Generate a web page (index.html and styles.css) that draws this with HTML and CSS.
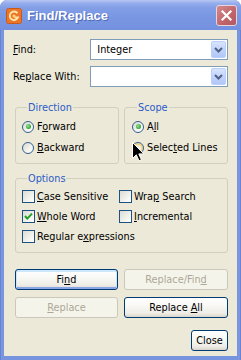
FILE: index.html
```html
<!DOCTYPE html>
<html>
<head>
<meta charset="utf-8">
<link rel="stylesheet" href="styles.css">
</head>
<body>
<div class="window">
  <div class="titlebar">
    <svg class="app-icon" width="16" height="16" viewBox="0 0 16 16">
      <rect x="0.5" y="0.5" width="15" height="15" rx="2" fill="#E9762B" stroke="#C85A18"/>
      <path d="M11.5 5.2 A4.3 4.3 0 1 0 12 9.5 L8.6 9.5" fill="none" stroke="#FFE6A8" stroke-width="1.8"/>
      <circle cx="8" cy="8" r="1.6" fill="#FFD27A"/>
    </svg>
    <span class="title">Find/Replace</span>
    <div class="close-btn">
      <svg width="13" height="13" viewBox="0 0 13 13"><path d="M2.5 2.5 L10.5 10.5 M10.5 2.5 L2.5 10.5" stroke="#fff" stroke-width="2.2" stroke-linecap="square"/></svg>
    </div>
  </div>
  <div class="client">
    <div class="field-row">
      <span class="field-label"><u>F</u>ind:</span>
      <div class="combo"><span class="combo-text">Integer</span><span class="combo-btn"><svg width="9" height="6" viewBox="0 0 9 6"><path d="M1 1 L4.5 4.5 L8 1" fill="none" stroke="#4D6185" stroke-width="2"/></svg></span></div>
    </div>
    <div class="field-row second">
      <span class="field-label">Re<u>p</u>lace With:</span>
      <div class="combo"><span class="combo-text"></span><span class="combo-btn"><svg width="9" height="6" viewBox="0 0 9 6"><path d="M1 1 L4.5 4.5 L8 1" fill="none" stroke="#4D6185" stroke-width="2"/></svg></span></div>
    </div>
    <div class="groups">
      <fieldset class="group group-dir">
        <legend>Direction</legend>
        <div class="opt"><span class="radio checked"></span><span>F<u>o</u>rward</span></div>
        <div class="opt"><span class="radio"></span><span><u>B</u>ackward</span></div>
      </fieldset>
      <fieldset class="group group-scope">
        <legend>Scope</legend>
        <div class="opt"><span class="radio checked"></span><span>A<u>l</u>l</span></div>
        <div class="opt"><span class="radio hover"></span><span>Selec<u>t</u>ed Lines</span></div>
      </fieldset>
    </div>
    <fieldset class="group group-options">
      <legend>Options</legend>
      <div class="opt-grid">
        <div class="opt"><span class="check"></span><span><u>C</u>ase Sensitive</span></div>
        <div class="opt"><span class="check"></span><span>Wra<u>p</u> Search</span></div>
        <div class="opt"><span class="check checked"><svg width="11" height="11" viewBox="0 0 11 11"><path d="M2 5 L4.3 7.6 L9 2.6" fill="none" stroke="#21A121" stroke-width="2"/></svg></span><span><u>W</u>hole Word</span></div>
        <div class="opt"><span class="check"></span><span><u>I</u>ncremental</span></div>
        <div class="opt wide"><span class="check"></span><span>Regular e<u>x</u>pressions</span></div>
      </div>
    </fieldset>
    <div class="buttons">
      <div class="btn default"><span>Fi<u>n</u>d</span></div>
      <div class="btn disabled"><span>Replace/Fin<u>d</u></span></div>
      <div class="btn disabled"><span><u>R</u>eplace</span></div>
      <div class="btn"><span>Replace <u>A</u>ll</span></div>
    </div>
    <div class="close-row">
      <div class="btn close"><span>Close</span></div>
    </div>
  </div>
  <svg class="cursor" width="13" height="20" viewBox="0 0 13 20">
    <path d="M0.5 0.5 L0.5 16.5 L4.3 12.8 L7 18.8 L9.4 17.8 L6.8 11.9 L11.8 11.9 Z" fill="#000" stroke="#fff" stroke-width="1"/>
  </svg>
</div>
</body>
</html>
```

FILE: styles.css
```css
html, body {
  margin: 0;
  padding: 0;
  background: #ffffff;
}

body {
  font-family: "DejaVu Sans Condensed", "Liberation Sans", sans-serif;
  font-size: 10.8px;
  color: #000;
}

.window {
  position: relative;
  width: 241px;
  height: 360px;
  display: flex;
  flex-direction: column;
  background: linear-gradient(90deg, #4E6FCB 0, #7E98DF 1px, #7794DE 3px, #7794DE 238px, #7E98DF 240px, #4E6FCB 241px);
  border-radius: 7px 7px 0 0;
  overflow: hidden;
}

.titlebar {
  height: 30px;
  flex: none;
  display: flex;
  align-items: center;
  padding: 1px 4px 0 6px;
  box-sizing: border-box;
  background: linear-gradient(180deg, #B8C8F2 0, #96AEEC 3px, #819EE6 8px, #7896E2 18px, #7391DE 30px);
  border-radius: 7px 7px 0 0;
}

.app-icon {
  flex: none;
  margin-right: 5px;
}

.title {
  font-family: "Liberation Sans", sans-serif;
  font-weight: bold;
  font-size: 13px;
  color: #ffffff;
  text-shadow: 1px 1px 0 #4F68B8;
}

.close-btn {
  margin-left: auto;
  width: 21px;
  height: 21px;
  box-sizing: border-box;
  border: 1px solid #E8D4DC;
  border-radius: 3px;
  background: linear-gradient(135deg, #D48A8C, #C06468 60%, #B05A62);
  display: flex;
  align-items: center;
  justify-content: center;
}

.client {
  flex: 1;
  margin: 0 4px 4px;
  background: #ECE9D8;
  padding: 9px 9px 0 0;
  box-sizing: border-box;
}

.field-row {
  display: flex;
  align-items: center;
  height: 21px;
  padding-left: 9px;
}

.field-row.second {
  margin-top: 6px;
}

.field-label {
  width: 78px;
}

.combo {
  width: 139px;
  height: 21px;
  box-sizing: border-box;
  border: 1px solid #7F9DB9;
  background: #fff;
  display: flex;
  align-items: center;
  padding: 1px;
}

.combo-text {
  flex: 1;
  padding-left: 5px;
}

.combo-btn {
  width: 15px;
  height: 17px;
  box-sizing: border-box;
  border: 1px solid #BAD0FA;
  border-radius: 2px;
  background: linear-gradient(180deg, #D8E4FD, #C2D3FB 50%, #B2C7F6);
  display: flex;
  align-items: center;
  justify-content: center;
}

.groups {
  display: flex;
  gap: 5px;
  margin: 14px 0 0 11px;
}

.group {
  margin: 0;
  padding: 1px 0 6px 6px;
  border: 1px solid #D0D0BF;
  border-radius: 3px;
  box-sizing: border-box;
  min-width: 0;
}

.groups .group {
  padding-top: 2px;
  padding-bottom: 5px;
}

.group legend {
  color: #2D5BC8;
  line-height: 13px;
  padding: 0 1px;
  margin-left: 5px;
}

.group-dir {
  width: 104px;
}

.groups .group-scope {
  width: 104px;
  padding-left: 7px;
}

.opt {
  display: flex;
  align-items: center;
  gap: 3px;
  height: 21px;
  white-space: nowrap;
}

.radio {
  flex: none;
  width: 12px;
  height: 12px;
  box-sizing: border-box;
  border-radius: 50%;
  border: 1px solid #335F8E;
  background: linear-gradient(135deg, #D9D8D0, #F4F4F0 60%, #FFFFFF);
  position: relative;
}

.radio.checked::after {
  content: "";
  position: absolute;
  left: 2.5px;
  top: 2.5px;
  width: 5px;
  height: 5px;
  border-radius: 50%;
  background: radial-gradient(circle at 40% 40%, #9EE39E, #3BAA3B 60%, #228F22);
}

.radio.hover {
  box-shadow: inset 0 0 0 2px #F6D57E;
}

.group-options {
  margin: 8px 0 0 11px;
  width: 213px;
}

.opt-grid {
  display: grid;
  grid-template-columns: 97px 1fr;
}

.opt-grid .opt {
  height: 20px;
  gap: 2px;
}

.opt-grid .opt.wide {
  grid-column: 1 / 3;
}

.check {
  flex: none;
  width: 13px;
  height: 13px;
  box-sizing: border-box;
  border: 1px solid #1C5180;
  background: linear-gradient(135deg, #DCDCD5, #F2F2EE 60%, #FFFFFF);
  display: flex;
  align-items: center;
  justify-content: center;
}

.buttons {
  display: grid;
  grid-template-columns: 103px 104px;
  column-gap: 6px;
  row-gap: 7px;
  margin: 16px 0 0 11px;
}

.btn {
  height: 21px;
  box-sizing: border-box;
  border: 1px solid #003C74;
  border-radius: 3px;
  background: linear-gradient(180deg, #FFFFFF 0, #F8F8F5 40%, #EEEDE6 80%, #DAD5CB 100%);
  display: flex;
  align-items: center;
  justify-content: center;
  color: #000;
  white-space: nowrap;
}

.btn.default {
  box-shadow: inset 0 1px 0 1px #CEE7FF, inset 0 -1px 0 1px #88A6E6;
}

.btn.disabled {
  border-color: #CAC8BB;
  background: #F5F4EA;
  color: #ACA899;
}

.close-row {
  display: flex;
  justify-content: flex-end;
  margin-top: 12px;
}

.btn.close {
  width: 37px;
}

.cursor {
  position: absolute;
  left: 132px;
  top: 142px;
}
```
